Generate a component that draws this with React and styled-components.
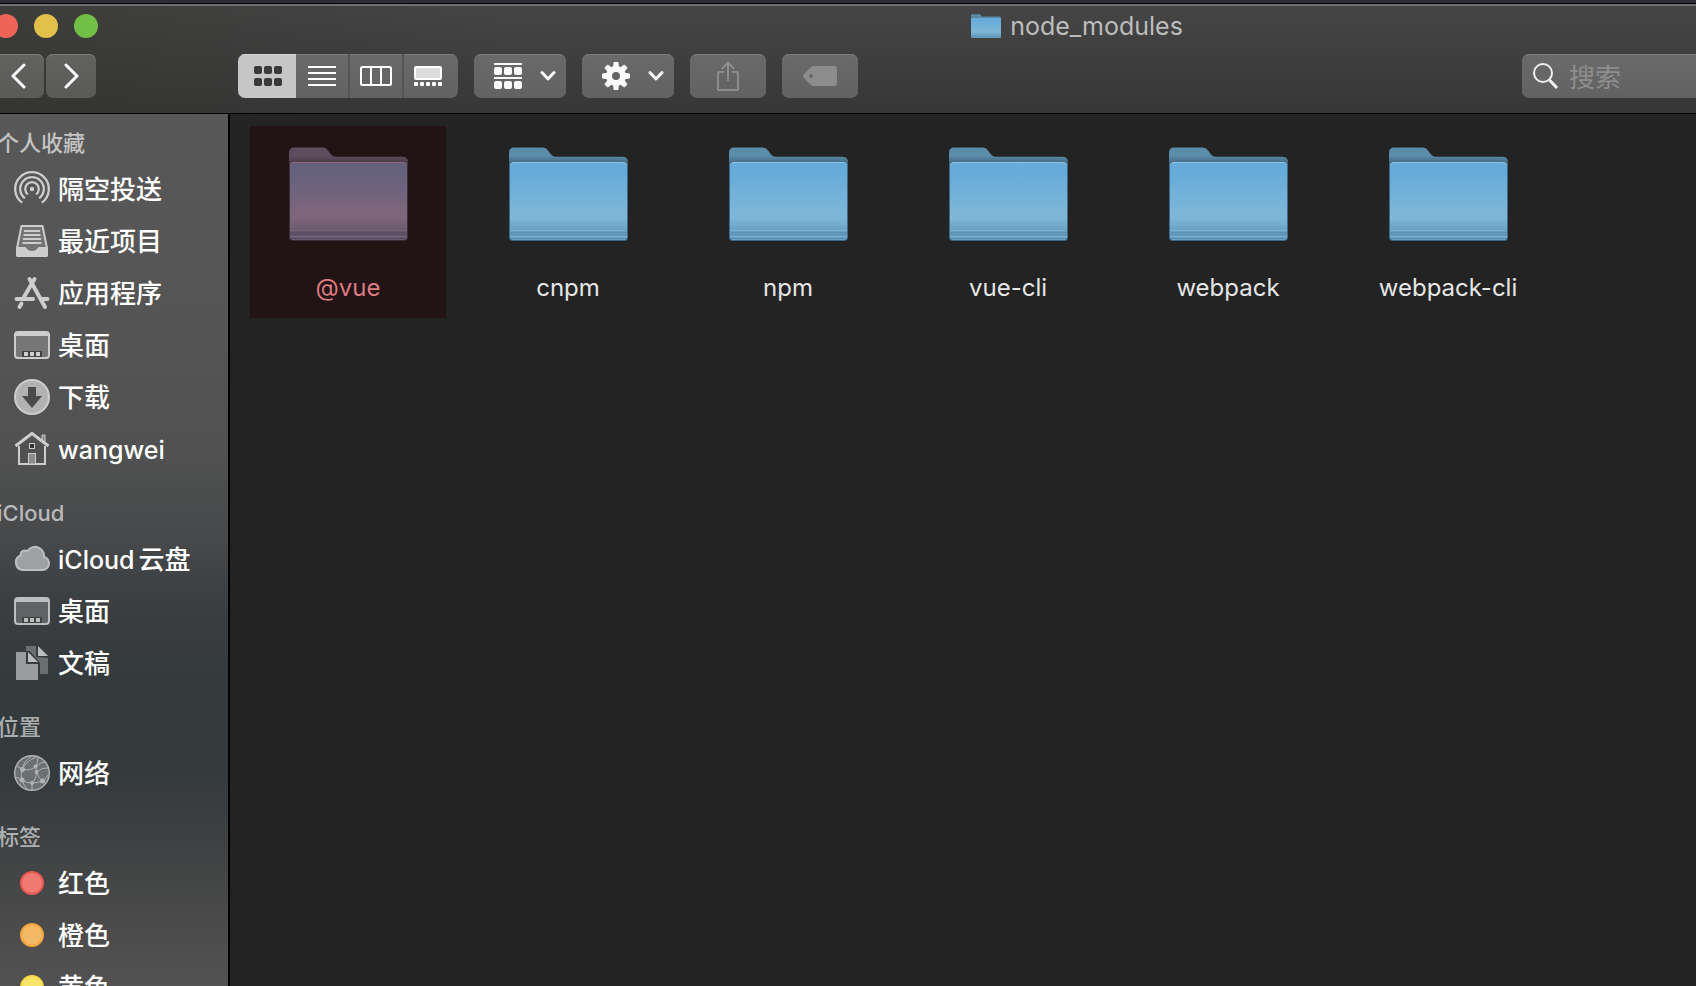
import { useId } from "react";
import styled, { createGlobalStyle } from "styled-components";

const GlobalStyle = createGlobalStyle`
  * {
    box-sizing: border-box;
  }
  body {
    margin: 0;
    background: #232323;
    font-family: Inter, "Noto Sans CJK SC", sans-serif;
  }
  svg {
    display: block;
    flex: none;
  }
`;

const Window = styled.div`
  display: flex;
  flex-direction: column;
  height: 100vh;
  overflow: hidden;
`;

const Desktop = styled.div`
  flex: none;
  height: 4px;
  background: #2d2d35;
  border-bottom: 1px solid #050505;
`;

const Header = styled.header`
  flex: none;
  border-top: 2px solid #6e706e;
  border-bottom: 1px solid #000;
  background: linear-gradient(90deg, rgba(48, 48, 44, 0.4), transparent 30%),
    linear-gradient(#454545, #373737);
`;

const TitleBar = styled.div`
  display: flex;
  align-items: center;
  height: 40px;
`;

const Lights = styled.div`
  display: flex;
  gap: 16px;
  margin-left: -6px;
`;

const Light = styled.button`
  width: 24px;
  height: 24px;
  padding: 0;
  border: none;
  border-radius: 50%;
  background: ${(props) => props.$color};
`;

const Title = styled.h1`
  flex: 1;
  display: flex;
  align-items: center;
  justify-content: center;
  gap: 9px;
  margin: 0;
  padding-left: 360px;
  font-size: 25px;
  font-weight: 400;
  line-height: 40px;
  color: #bdbdbd;
`;

const Toolbar = styled.div`
  display: flex;
  gap: 16px;
  padding: 8px 0 15px;
`;

const Nav = styled.div`
  display: flex;
  gap: 2px;
  margin-left: -6px;
  margin-right: 126px;
`;

const ToolButton = styled.button`
  display: flex;
  align-items: center;
  justify-content: ${(props) => (props.$menu ? "space-between" : "center")};
  width: ${(props) => props.$width}px;
  height: 44px;
  padding: ${(props) => (props.$menu ? "0 10px 0 20px" : "0")};
  border: none;
  border-radius: 7px;
  background: ${(props) =>
    props.$dim
      ? "linear-gradient(#626260, #5a5a58)"
      : "linear-gradient(#6a6a6a, #626262)"};
  box-shadow: inset 0 1px 0 #7c7c7c;
  color: ${(props) => (props.disabled ? "#8d8d8d" : "#fafafa")};
`;

const Segments = styled.div`
  display: flex;
  height: 44px;
  border-radius: 7px;
  overflow: hidden;
`;

const Segment = styled.button`
  display: flex;
  align-items: center;
  justify-content: center;
  width: ${(props) => props.$width}px;
  padding: 0;
  border: none;
  background: ${(props) =>
    props.$active ? "#c6c6c6" : "linear-gradient(#6a6a6a, #626262)"};
  box-shadow: inset 0 1px 0 ${(props) => (props.$active ? "#d2d2d2" : "#7c7c7c")};
  color: ${(props) => (props.$active ? "#3a3a3a" : "#fff")};

  & + & + & {
    border-left: 2px solid #555;
  }

  &:first-child {
    padding-left: 2px;
  }

  &:last-child {
    padding-right: 6px;
  }
`;

const Search = styled.label`
  display: flex;
  align-items: center;
  gap: 10px;
  width: 174px;
  height: 44px;
  margin-left: auto;
  padding-left: 11px;
  border-radius: 7px 0 0 7px;
  background: linear-gradient(#6a6a6a, #626262);
  box-shadow: inset 0 1px 0 #7c7c7c;
  color: #f0f0f0;
`;

const SearchInput = styled.input`
  flex: 1;
  min-width: 0;
  height: 40px;
  padding: 2px 0 0;
  border: none;
  outline: none;
  background: none;
  font-family: inherit;
  font-size: 26px;
  color: #fff;

  &::placeholder {
    color: #8e8e8e;
    opacity: 1;
  }
`;

const Body = styled.div`
  flex: 1;
  display: flex;
  min-height: 0;
`;

const Sidebar = styled.nav`
  flex: none;
  display: flex;
  flex-direction: column;
  gap: 18px;
  width: 230px;
  padding-top: 9px;
  border-right: 2px solid #000;
  overflow: hidden;
  background: linear-gradient(
    #585858 0%,
    #545454 28%,
    #505150 39%,
    #46484a 49%,
    #3a3e40 57%,
    #34393c 66%,
    #353a3d 76%,
    #404243 85%,
    #4b4b4b 93%,
    #525252 100%
  );
`;

const SectionTitle = styled.h2`
  margin: 0 0 0 -3px;
  font-size: 22px;
  font-weight: 500;
  line-height: 40px;
  color: ${(props) => props.$color};
`;

const List = styled.ul`
  margin: 0;
  padding: 0;
  list-style: none;
`;

const Item = styled.a`
  display: flex;
  align-items: center;
  gap: 8px;
  height: 52px;
  padding-left: 14px;
  text-decoration: none;
  color: #fff;

  svg {
    color: ${(props) => props.$tint};
  }
`;

const Label = styled.span`
  padding-top: 2px;
  font-size: 26px;
  font-weight: 500;
  line-height: 40px;
  white-space: nowrap;
`;

const Latin = styled.span`
  font-size: 25px;

  &:not(:last-child) {
    margin-right: 4px;
  }
`;

const Dot = styled.span`
  flex: none;
  width: 24px;
  height: 24px;
  margin: 0 6px;
  border: 2px solid ${(props) => props.$border};
  border-radius: 50%;
  background: ${(props) => props.$color};
`;

const Files = styled.main`
  flex: 1;
  display: grid;
  grid-template-columns: repeat(auto-fill, 196px);
  align-content: start;
  gap: 24px;
  padding: 12px 0 0 20px;
  background: #232323;
`;

const File = styled.button`
  display: flex;
  flex-direction: column;
  align-items: center;
  gap: 32px;
  height: 192px;
  padding: 21px 0 0;
  border: none;
  background: ${(props) => (props.$selected ? "#221314" : "none")};
  font-family: inherit;
  font-size: 24px;
  font-weight: 400;
  line-height: 30px;
  color: ${(props) => (props.$selected ? "#de7b80" : "#e6e6e6")};
`;

const blue = {
  tab: ["#5b8dab", "#41647b"],
  front: ["#66abd9", "#7db6d8", "#679dc0"],
  shine: "#8cc3e2",
  stripe: "#5a8fb3",
  edge: "#3f6a87",
};

const plum = {
  tab: ["#5f4d5f", "#443843"],
  front: ["#64617c", "#7e667c", "#67576c"],
  shine: "#94697c",
  stripe: "#544c60",
  edge: "#3b2d3a",
};

const Folder = ({ width = 119, height = 94, colors = blue }) => {
  const id = useId();
  return (
    <svg width={width} height={height} viewBox="0 0 119 94" preserveAspectRatio="none">
      <defs>
        <linearGradient id={`${id}tab`} x1="0" y1="0" x2="0" y2="1">
          <stop offset="0" stopColor={colors.tab[0]} />
          <stop offset=".5" stopColor={colors.tab[0]} />
          <stop offset="1" stopColor={colors.tab[1]} />
        </linearGradient>
        <linearGradient id={`${id}front`} x1="0" y1="0" x2="0" y2="1">
          <stop offset="0" stopColor={colors.front[0]} />
          <stop offset=".12" stopColor={colors.front[0]} />
          <stop offset=".64" stopColor={colors.front[1]} />
          <stop offset=".72" stopColor={colors.front[1]} />
          <stop offset=".9" stopColor={colors.front[2]} />
          <stop offset="1" stopColor={colors.front[2]} />
        </linearGradient>
      </defs>
      <path
        d="M0 17V6Q0 .5 5 .5H34Q37 .5 39 3.500L42 7.500Q44 9.800 47 9.800H113Q119 9.800 119 15V17Z"
        fill={`url(#${id}tab)`}
      />
      <path d="M0 20V17H119V20Z" fill={colors.tab[1]} />
      <rect y="16" width="119" height="78" rx="4" fill={colors.edge} />
      <rect x="1" y="15" width="117" height="78" rx="4" fill={colors.shine} />
      <rect x="1" y="16" width="117" height="77" rx="4" fill={`url(#${id}front)`} />
      <path d="M1 83.500H118M1 89.500H118" stroke={colors.front[1]} strokeOpacity=".7" />
      <path d="M1 85.500H118M1 87.500H118M1 91.500H118" stroke={colors.stripe} />
    </svg>
  );
};

const Chevron = () => (
  <svg width="16" height="12" fill="none" stroke="currentColor" strokeWidth="3" strokeLinecap="round" strokeLinejoin="round">
    <path d="M2 2.500L8 9L14 2.500" />
  </svg>
);

const Arrow = ({ d }) => (
  <svg width="16" height="26" fill="none" stroke="currentColor" strokeWidth="3" strokeLinecap="round" strokeLinejoin="round">
    <path d={d} />
  </svg>
);

const GridIcon = () => (
  <svg width="28" height="20" fill="currentColor">
    {[0, 12].map((y) =>
      [0, 10, 20].map((x) => (
        <rect key={`${x}-${y}`} x={x} y={y} width="8" height="8" rx="2" />
      ))
    )}
  </svg>
);

const ListIcon = () => (
  <svg width="28" height="20" stroke="currentColor" strokeWidth="2">
    <path d="M0 1H28M0 7H28M0 13H28M0 19H28" />
  </svg>
);

const ColumnsIcon = () => (
  <svg width="32" height="20" fill="none" stroke="currentColor" strokeWidth="2">
    <rect x="1" y="1" width="30" height="18" rx="1.500" />
    <path d="M11 1V19M21 1V19" />
  </svg>
);

const GalleryIcon = () => (
  <svg width="28" height="20" fill="currentColor">
    <rect x="1" y="1" width="26" height="12" rx="1" fill="#dcdcdc" stroke="currentColor" strokeWidth="2" />
    {[0, 6, 12, 18, 24].map((x) => (
      <rect key={x} x={x} y="16" width="4" height="4" rx="1" />
    ))}
  </svg>
);

const GroupIcon = () => (
  <svg width="28" height="26" fill="currentColor">
    <rect width="28" height="2" />
    <rect y="14" width="28" height="2" />
    {[4, 18].map((y) =>
      [0, 10, 20].map((x) => (
        <rect key={`${x}-${y}`} x={x} y={y} width="8" height="8" rx="2" />
      ))
    )}
  </svg>
);

const GearIcon = () => (
  <svg width="28" height="28" viewBox="-14 -14 28 28">
    <circle r="7" fill="none" stroke="currentColor" strokeWidth="6" />
    {[0, 45, 90, 135, 180, 225, 270, 315].map((a) => (
      <path
        key={a}
        d="M-3.200 -8L-2.400 -13.500Q-2.300 -14 -1.800 -14H1.800Q2.300 -14 2.400 -13.500L3.200 -8Z"
        fill="currentColor"
        transform={`rotate(${a})`}
      />
    ))}
  </svg>
);

const ShareIcon = () => (
  <svg width="22" height="30" fill="none" stroke="currentColor" strokeWidth="2">
    <path d="M7 11H2Q1 11 1 12V28Q1 29 2 29H20Q21 29 21 28V12Q21 11 20 11H15" />
    <path d="M11 20V2M5 8L11 1.500L17 8" />
  </svg>
);

const TagIcon = () => (
  <svg width="34" height="20" fill="currentColor" fillRule="evenodd">
    <path d="M11 0H31Q34 0 34 3V17Q34 20 31 20H11Q9 20 7.500 18.500L1 12Q-1 10 1 8L7.500 1.500Q9 0 11 0ZM8 8a2 2 0 1 0 0 4a2 2 0 1 0 0 -4Z" />
  </svg>
);

const SearchIcon = () => (
  <svg width="26" height="26" fill="none" stroke="currentColor" strokeWidth="2">
    <circle cx="10" cy="10" r="9" />
    <path d="M16.500 17L24 25" strokeWidth="3" />
  </svg>
);

const AirDropIcon = () => (
  <svg width="36" height="36" viewBox="0 0 36 36" fill="none" stroke="currentColor" strokeWidth="2.300">
    <circle cx="18" cy="18" r="2.200" fill="currentColor" stroke="none" />
    <path d="M8.200 31.600A16.800 16.800 0 1 1 27.800 31.600" />
    <path d="M10.800 27.300A11.800 11.800 0 1 1 25.200 27.300" />
    <path d="M13.800 23.300A6.800 6.800 0 1 1 22.200 23.300" />
  </svg>
);

const RecentsIcon = () => (
  <svg width="36" height="36" viewBox="0 0 36 36" fill="none" stroke="currentColor" strokeWidth="2">
    <path d="M7.500 3H28.500L33 25V32Q33 33 32 33H4Q3 33 3 32V25Z" fill="#747474" />
    <path d="M3 25H11Q13 29 18 29T25 25H33V32Q33 33 32 33H4Q3 33 3 32Z" fill="currentColor" />
    <path d="M10 8H26M9.500 12H26.500M9 16H27M8.500 20H27.500" />
  </svg>
);

const AppsIcon = () => (
  <svg width="36" height="36" viewBox="0 0 36 36" fill="none" stroke="currentColor" strokeWidth="4" strokeLinecap="round">
    <path d="M20.500 4L10 22M15.500 4L31 32M2.500 24H19M28 24H33.500M7.500 28.500L5.500 32" />
  </svg>
);

const DesktopIcon = ({ screen }) => (
  <svg width="36" height="36" viewBox="0 0 36 36" fill="currentColor">
    <rect x="1" y="5" width="34" height="26" rx="3" fill={screen} stroke="currentColor" strokeWidth="2" />
    <path d="M1 8Q1 5 4 5H32Q35 5 35 8V9H1Z" />
    <rect x="8" y="24" width="20" height="6" fill="#404242" />
    <path d="M10 25H14V29H10ZM16 25H20V29H16ZM22 25H26V29H22Z" />
  </svg>
);

const DownloadIcon = () => (
  <svg width="36" height="36" viewBox="0 0 36 36">
    <circle cx="18" cy="18" r="17" fill="#b2b2b2" stroke="currentColor" strokeWidth="2" />
    <path d="M14 8H22V17H28L18 29L8 17H14Z" fill="#4b4b4b" />
  </svg>
);

const HomeIcon = () => (
  <svg width="36" height="36" viewBox="0 0 36 36" fill="none" stroke="currentColor" strokeWidth="2">
    <path d="M28 10V4H31V13" fill="#888" strokeWidth="1" />
    <path d="M5 15V33H31V15" />
    <rect x="15.500" y="12.500" width="5" height="5" fill="#333" strokeWidth="1" />
    <rect x="14.500" y="22.500" width="7" height="10.500" fill="#8b8b8b" strokeWidth="1" />
    <path d="M1.500 15L18 2.500L34.500 15" strokeWidth="3" />
  </svg>
);

const CloudIcon = () => (
  <svg width="36" height="36" viewBox="0 0 36 36">
    <path
      d="M8.500 29A7.600 7.600 0 0 1 6.500 14.500Q6.500 9.500 11 9.500Q12.500 9.500 13.500 10A9 9 0 0 1 30 16A6.600 6.600 0 0 1 28.500 29Z"
      fill="#9fa2a3"
      stroke="currentColor"
      strokeWidth="2"
    />
  </svg>
);

const DocumentsIcon = () => (
  <svg width="36" height="36" viewBox="0 0 36 36">
    <path d="M12 1H22V12L34 13V29H26V18L16 6H12Z" fill="#6a6f71" />
    <path d="M24 1L34 11H24Z" fill="currentColor" />
    <path d="M2 7H12V19H24V35H2Z" fill="#989c9e" />
    <path d="M14 7L24 17H14Z" fill="currentColor" />
  </svg>
);

const NetworkIcon = () => (
  <svg width="36" height="36" viewBox="0 0 36 36" fill="none" stroke="currentColor" strokeWidth="1">
    <circle cx="18" cy="18" r="17.300" fill="#6b7072" strokeWidth="1.400" />
    <path d="M3 11Q7 15 14 15Q20 14 22 11.500Q24 6 24 2M22 11.500Q27 7 31 7M18 1Q10 5 8.500 14Q6 20 8 25Q10 31 13 34M1.500 22Q5 23 8 25.500Q13 28 18 28Q24 28 28.500 26Q32 24 34 20M18 28Q22 25 22.500 17L22 11.500M22.500 17Q25 24 28.500 26M18 28V35M22.500 17Q28 12 34 13M8.500 14Q12 6 22 2" />
    <g fill="currentColor" stroke="none">
      <circle cx="8.500" cy="14.500" r="2.500" />
      <circle cx="21.500" cy="11.500" r="2" />
      <circle cx="22.500" cy="17" r="2" />
      <circle cx="8" cy="25" r="2.500" />
      <circle cx="18" cy="28" r="2" />
      <circle cx="28.500" cy="26" r="2.500" />
    </g>
  </svg>
);

const sections = [
  {
    title: "个人收藏",
    color: "#c4c4c4",
    tint: "#cdcdcd",
    items: [
      { name: "隔空投送", icon: <AirDropIcon /> },
      { name: "最近项目", icon: <RecentsIcon /> },
      { name: "应用程序", icon: <AppsIcon /> },
      { name: "桌面", icon: <DesktopIcon screen="#777" /> },
      { name: "下载", icon: <DownloadIcon /> },
      { latin: "wangwei", icon: <HomeIcon /> },
    ],
  },
  {
    title: "iCloud",
    color: "#b8b9ba",
    tint: "#bcbebf",
    items: [
      { latin: "iCloud", name: "云盘", icon: <CloudIcon /> },
      { name: "桌面", icon: <DesktopIcon screen="#5f6365" /> },
      { name: "文稿", icon: <DocumentsIcon /> },
    ],
  },
  {
    title: "位置",
    color: "#abaeaf",
    tint: "#b0b3b4",
    items: [{ name: "网络", icon: <NetworkIcon /> }],
  },
  {
    title: "标签",
    color: "#adb0b1",
    items: [
      { name: "红色", icon: <Dot $color="#ee7a70" $border="#eb5a50" /> },
      { name: "橙色", icon: <Dot $color="#f3b964" $border="#f0a63c" /> },
      { name: "黄色", icon: <Dot $color="#fae56c" $border="#f4d946" /> },
    ],
  },
];

const files = ["@vue", "cnpm", "npm", "vue-cli", "webpack", "webpack-cli"];

const App = () => {
  return (
    <Window>
      <GlobalStyle />
      <Desktop />
      <Header>
        <TitleBar>
          <Lights>
            <Light $color="#ee6459" aria-label="close" />
            <Light $color="#e1c04c" aria-label="minimize" />
            <Light $color="#71bf47" aria-label="zoom" />
          </Lights>
          <Title>
            <Folder width={30} height={24} />
            node_modules
          </Title>
        </TitleBar>
        <Toolbar>
          <Nav>
            <ToolButton $width={50} $dim aria-label="back">
              <Arrow d="M13 2L2 13L13 24" />
            </ToolButton>
            <ToolButton $width={50} $dim aria-label="forward">
              <Arrow d="M3 2L14 13L3 24" />
            </ToolButton>
          </Nav>
          <Segments>
            <Segment $width={58} $active aria-label="icons">
              <GridIcon />
            </Segment>
            <Segment $width={52} aria-label="list">
              <ListIcon />
            </Segment>
            <Segment $width={54} aria-label="columns">
              <ColumnsIcon />
            </Segment>
            <Segment $width={56} aria-label="gallery">
              <GalleryIcon />
            </Segment>
          </Segments>
          <ToolButton $width={92} $menu aria-label="group">
            <GroupIcon />
            <Chevron />
          </ToolButton>
          <ToolButton $width={92} $menu aria-label="actions">
            <GearIcon />
            <Chevron />
          </ToolButton>
          <ToolButton $width={76} disabled aria-label="share">
            <ShareIcon />
          </ToolButton>
          <ToolButton $width={76} disabled aria-label="tags">
            <TagIcon />
          </ToolButton>
          <Search>
            <SearchIcon />
            <SearchInput placeholder="搜索" aria-label="搜索" />
          </Search>
        </Toolbar>
      </Header>
      <Body>
        <Sidebar>
          {sections.map((section) => (
            <section key={section.title}>
              <SectionTitle $color={section.color}>{section.title}</SectionTitle>
              <List>
                {section.items.map((item, i) => (
                  <li key={i}>
                    <Item href="#" $tint={section.tint}>
                      {item.icon}
                      <Label>
                        {item.latin && <Latin>{item.latin}</Latin>}
                        {item.name && <span>{item.name}</span>}
                      </Label>
                    </Item>
                  </li>
                ))}
              </List>
            </section>
          ))}
        </Sidebar>
        <Files>
          {files.map((name) => (
            <File key={name} $selected={name === "@vue"}>
              <Folder colors={name === "@vue" ? plum : blue} />
              {name}
            </File>
          ))}
        </Files>
      </Body>
    </Window>
  );
};

export default App;
